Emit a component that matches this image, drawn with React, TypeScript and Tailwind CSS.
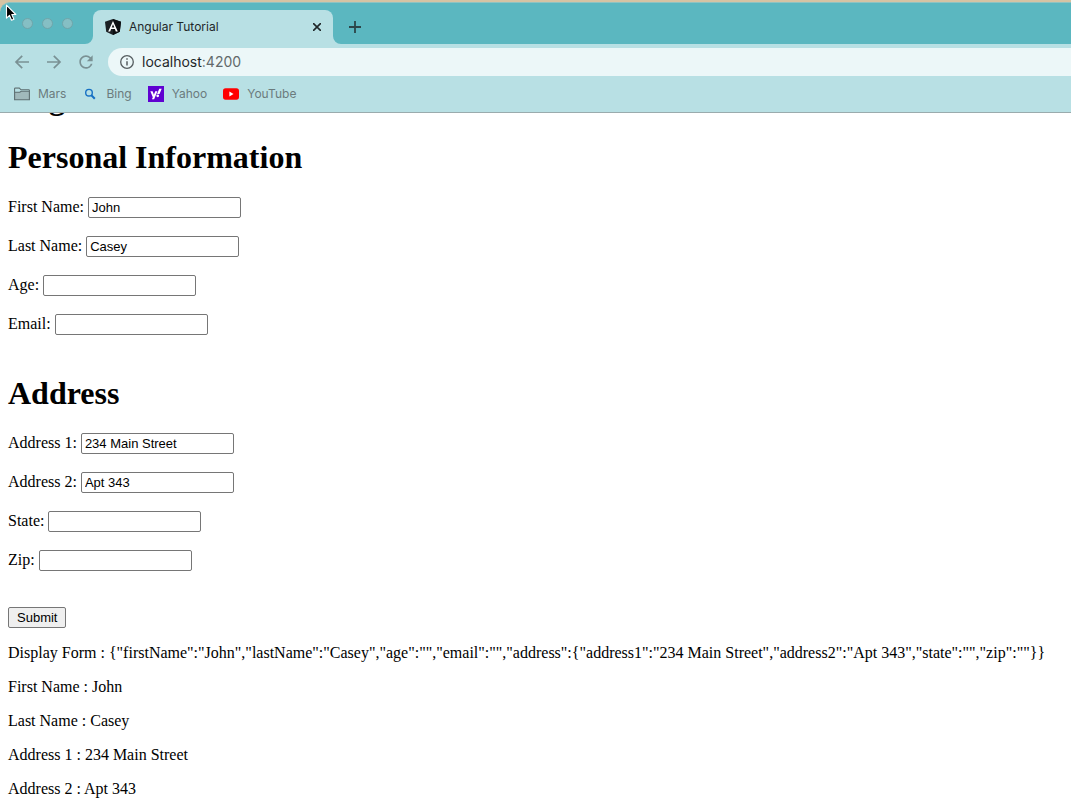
import { useState } from "react";
import type { ReactNode } from "react";
import { MdRefresh } from "react-icons/md";
import { FaYahoo } from "react-icons/fa";

type Address = { address1: string; address2: string; state: string; zip: string };
type FormValue = {
  firstName: string;
  lastName: string;
  age: string;
  email: string;
  address: Address;
};

const initialValue: FormValue = {
  firstName: "John",
  lastName: "Casey",
  age: "",
  email: "",
  address: { address1: "234 Main Street", address2: "Apt 343", state: "", zip: "" },
};

function Pointer() {
  return (
    <svg
      className="pointer-events-none absolute top-[4px] left-[5px] h-[18px] w-[12px]"
      viewBox="0 0 12 18"
      aria-hidden="true"
    >
      <path
        d="M1.5 1.2v13l3-2.8 2 4.9 2.4-1-2.1-4.8h4z"
        fill="#000"
        stroke="#fff"
        strokeWidth="1.1"
        strokeLinejoin="round"
      />
    </svg>
  );
}

function AngularIcon() {
  return (
    <svg className="h-4 w-4 shrink-0" viewBox="0 0 16 16" aria-hidden="true">
      <path d="M8 0l8 2.7-1.2 10L8 16l-6.8-3.3L0 2.7z" fill="#1b2024" />
      <path d="M8 0l8 2.7-1.2 10L8 16z" fill="#0c0f12" />
      <path
        fillRule="evenodd"
        d="M8 1.9L3.2 12.4H5.2L6.1 10H9.9L10.8 12.4H12.8zM8 5.2L9.3 8.4H6.7z"
        fill="#fff"
      />
    </svg>
  );
}

function ArrowIcon({ forward = false }: { forward?: boolean }) {
  return (
    <svg
      className="h-4 w-4"
      viewBox="0 0 16 16"
      fill="none"
      stroke="#7a9194"
      strokeWidth="1.7"
      aria-hidden="true"
    >
      <path d={forward ? "M1 8h13M7.8 1.8L14 8l-6.2 6.2" : "M15 8H2M8.200 1.8L2 8l6.200 6.2"} />
    </svg>
  );
}

function InfoIcon() {
  return (
    <svg className="h-[14px] w-[14px] shrink-0" viewBox="0 0 14 14" aria-hidden="true">
      <circle cx="7" cy="7" r="6.3" fill="none" stroke="#565d60" strokeWidth="1.3" />
      <path d="M7 6.2v4.4M7 3.3v1.5" stroke="#565d60" strokeWidth="1.5" />
    </svg>
  );
}

function FolderIcon() {
  return (
    <svg className="h-[14px] w-4" viewBox="0 0 16 14" aria-hidden="true">
      <path
        d="M.6 12.8V1.8q0-.7.7-.7h4l1.700 1.700h7.700q.7 0 .7.7v9.300z"
        fill="#a0b9bb"
        stroke="#5d6f71"
        strokeWidth="1.1"
      />
      <path d="M1.2 1.700h3.900l1.600 1.700h8.100v.9H7.200L5.800 5H1.200z" fill="#b8e0e4" />
      <path d="M.6 5.300h5.200l1.400-1h7.800" fill="none" stroke="#5d6f71" strokeWidth="1.1" />
    </svg>
  );
}

function BingIcon() {
  return (
    <svg
      className="h-4 w-4"
      viewBox="0 0 16 16"
      fill="none"
      stroke="#1670c4"
      aria-hidden="true"
    >
      <circle cx="7" cy="6.7" r="3.3" strokeWidth="1.4" />
      <path d="M9.4 9.2l3.4 3.6" strokeWidth="2" />
    </svg>
  );
}

function YahooIcon() {
  return (
    <span className="flex h-4 w-4 items-center justify-center bg-[#5f01d1]">
      <FaYahoo className="h-3 w-3 text-white" aria-hidden="true" />
    </span>
  );
}

function YouTubeIcon() {
  return (
    <svg className="h-4 w-4" viewBox="0 0 16 16" aria-hidden="true">
      <rect x="0" y="2.3" width="16" height="11.4" rx="2.6" fill="#f00" />
      <path d="M6.4 5.6v4.8L10.5 8z" fill="#fff" />
    </svg>
  );
}

function TabFoot({ right = false }: { right?: boolean }) {
  return (
    <svg className="h-2 w-2 self-end" viewBox="0 0 8 8" aria-hidden="true">
      <path d={right ? "M0 0a8 8 0 0 0 8 8H0z" : "M8 0a8 8 0 0 1-8 8h8z"} fill="#b8e0e4" />
    </svg>
  );
}

function Bookmark({ icon, children }: { icon: ReactNode; children: ReactNode }) {
  return (
    <a href="#" className="flex items-center gap-2">
      {icon}
      {children}
    </a>
  );
}

function BrowserChrome() {
  return (
    <header className="relative bg-[#d6c3a3] pt-[2px] font-['Inter','Liberation_Sans',sans-serif]">
      <div className="flex h-[42px] rounded-tl-[10px] border-t border-[#8fc3c2] bg-[#5bb7c0] pt-[7px]">
        <div className="flex w-[85px] gap-[9px] pt-2 pl-[22px]">
          <span className="h-[11px] w-[11px] rounded-full border border-[#6fa5aa] bg-[#85bfc4]" />
          <span className="h-[11px] w-[11px] rounded-full border border-[#6fa5aa] bg-[#85bfc4]" />
          <span className="h-[11px] w-[11px] rounded-full border border-[#6fa5aa] bg-[#85bfc4]" />
        </div>
        <TabFoot />
        <div className="flex w-60 items-center gap-2 rounded-t-lg bg-[#b8e0e4] pr-[10px] pl-3 text-xs text-[#1f2729]">
          <AngularIcon />
          <span className="flex-1">Angular Tutorial</span>
          <button type="button" aria-label="Close tab" className="p-[2px]">
            <svg className="h-2 w-2" viewBox="0 0 8 8" stroke="#1f2729" strokeWidth="1.6" aria-hidden="true">
              <path d="M0 0l8 8M8 0L0 8" />
            </svg>
          </button>
        </div>
        <TabFoot right />
        <button type="button" aria-label="New tab" className="pl-2">
          <svg className="h-3 w-3" viewBox="0 0 12 12" stroke="#2c4548" strokeWidth="1.8" aria-hidden="true">
            <path d="M6 0v12M0 6h12" />
          </svg>
        </button>
      </div>

      <div className="flex h-9 items-center bg-[#b8e0e4] pl-[14px]">
        <div className="flex w-[94px] items-center gap-4">
          <button type="button" aria-label="Back">
            <ArrowIcon />
          </button>
          <button type="button" aria-label="Forward">
            <ArrowIcon forward />
          </button>
          <button type="button" aria-label="Reload" className="-ml-[2px]">
            <MdRefresh className="h-5 w-5 text-[#7a9194]" aria-hidden="true" />
          </button>
        </div>
        <div className="flex h-7 flex-1 items-center gap-2 rounded-l-full bg-[#ecf7f8] pl-3 text-sm text-[#1f2729]">
          <InfoIcon />
          <span>
            localhost<span className="text-[#62696b]">:4200</span>
          </span>
        </div>
      </div>

      <nav
        aria-label="Bookmarks"
        className="flex h-[33px] items-center gap-4 border-b border-[#9aabad] bg-[#b8e0e4] pb-[5px] pl-[14px] text-xs text-[#6b7b7d]"
      >
        <Bookmark icon={<FolderIcon />}>Mars</Bookmark>
        <Bookmark icon={<BingIcon />}>Bing</Bookmark>
        <Bookmark icon={<YahooIcon />}>Yahoo</Bookmark>
        <Bookmark icon={<YouTubeIcon />}>YouTube</Bookmark>
      </nav>
      <Pointer />
    </header>
  );
}

function Field({
  id,
  label,
  value,
  onChange,
}: {
  id: string;
  label: string;
  value: string;
  onChange: (value: string) => void;
}) {
  return (
    <div className="flex h-[21px] items-start gap-1">
      <label htmlFor={id} className="leading-5">
        {label}
      </label>
      <input
        id={id}
        type="text"
        value={value}
        onChange={(event) => onChange(event.target.value)}
        className="h-[21px] w-[153px] rounded-[2px] border border-[#767676] bg-white px-[3px] font-['Liberation_Sans',sans-serif] text-[13px]"
      />
    </div>
  );
}

function Heading({ children }: { children: ReactNode }) {
  return <h1 className="text-[32px] leading-9 font-bold">{children}</h1>;
}

export default function App() {
  const [form, setForm] = useState<FormValue>(initialValue);
  const { address } = form;
  const setAddress = (part: Partial<Address>) =>
    setForm({ ...form, address: { ...address, ...part } });

  return (
    <div className="min-h-screen bg-white">
      <BrowserChrome />
      <main className="overflow-hidden px-2 font-['Liberation_Serif',serif] text-base text-black">
        <div className="-mt-[33px] mb-[23px]">
          <Heading>Angular</Heading>
        </div>
        <form onSubmit={(event) => event.preventDefault()}>
          <Heading>Personal Information</Heading>
          <div className="mt-[22px] mb-10 flex flex-col gap-[18px]">
            <Field id="firstName" label="First Name:" value={form.firstName} onChange={(firstName) => setForm({ ...form, firstName })} />
            <Field id="lastName" label="Last Name:" value={form.lastName} onChange={(lastName) => setForm({ ...form, lastName })} />
            <Field id="age" label="Age:" value={form.age} onChange={(age) => setForm({ ...form, age })} />
            <Field id="email" label="Email:" value={form.email} onChange={(email) => setForm({ ...form, email })} />
          </div>
          <Heading>Address</Heading>
          <div className="mt-[22px] mb-9 flex flex-col gap-[18px]">
            <Field id="address1" label="Address 1:" value={address.address1} onChange={(address1) => setAddress({ address1 })} />
            <Field id="address2" label="Address 2:" value={address.address2} onChange={(address2) => setAddress({ address2 })} />
            <Field id="state" label="State:" value={address.state} onChange={(state) => setAddress({ state })} />
            <Field id="zip" label="Zip:" value={address.zip} onChange={(zip) => setAddress({ zip })} />
          </div>
          <button
            type="submit"
            className="flex h-[21px] items-center rounded-[2px] border border-[#767676] bg-[#efefef] px-2 font-['Liberation_Sans',sans-serif] text-[13px]"
          >
            Submit
          </button>
        </form>
        <div className="mt-4 flex flex-col gap-4 leading-[18px]">
          <p>Display Form : {JSON.stringify(form)}</p>
          <p>First Name : {form.firstName}</p>
          <p>Last Name : {form.lastName}</p>
          <p>Address 1 : {address.address1}</p>
          <p>Address 2 : {address.address2}</p>
        </div>
      </main>
    </div>
  );
}
